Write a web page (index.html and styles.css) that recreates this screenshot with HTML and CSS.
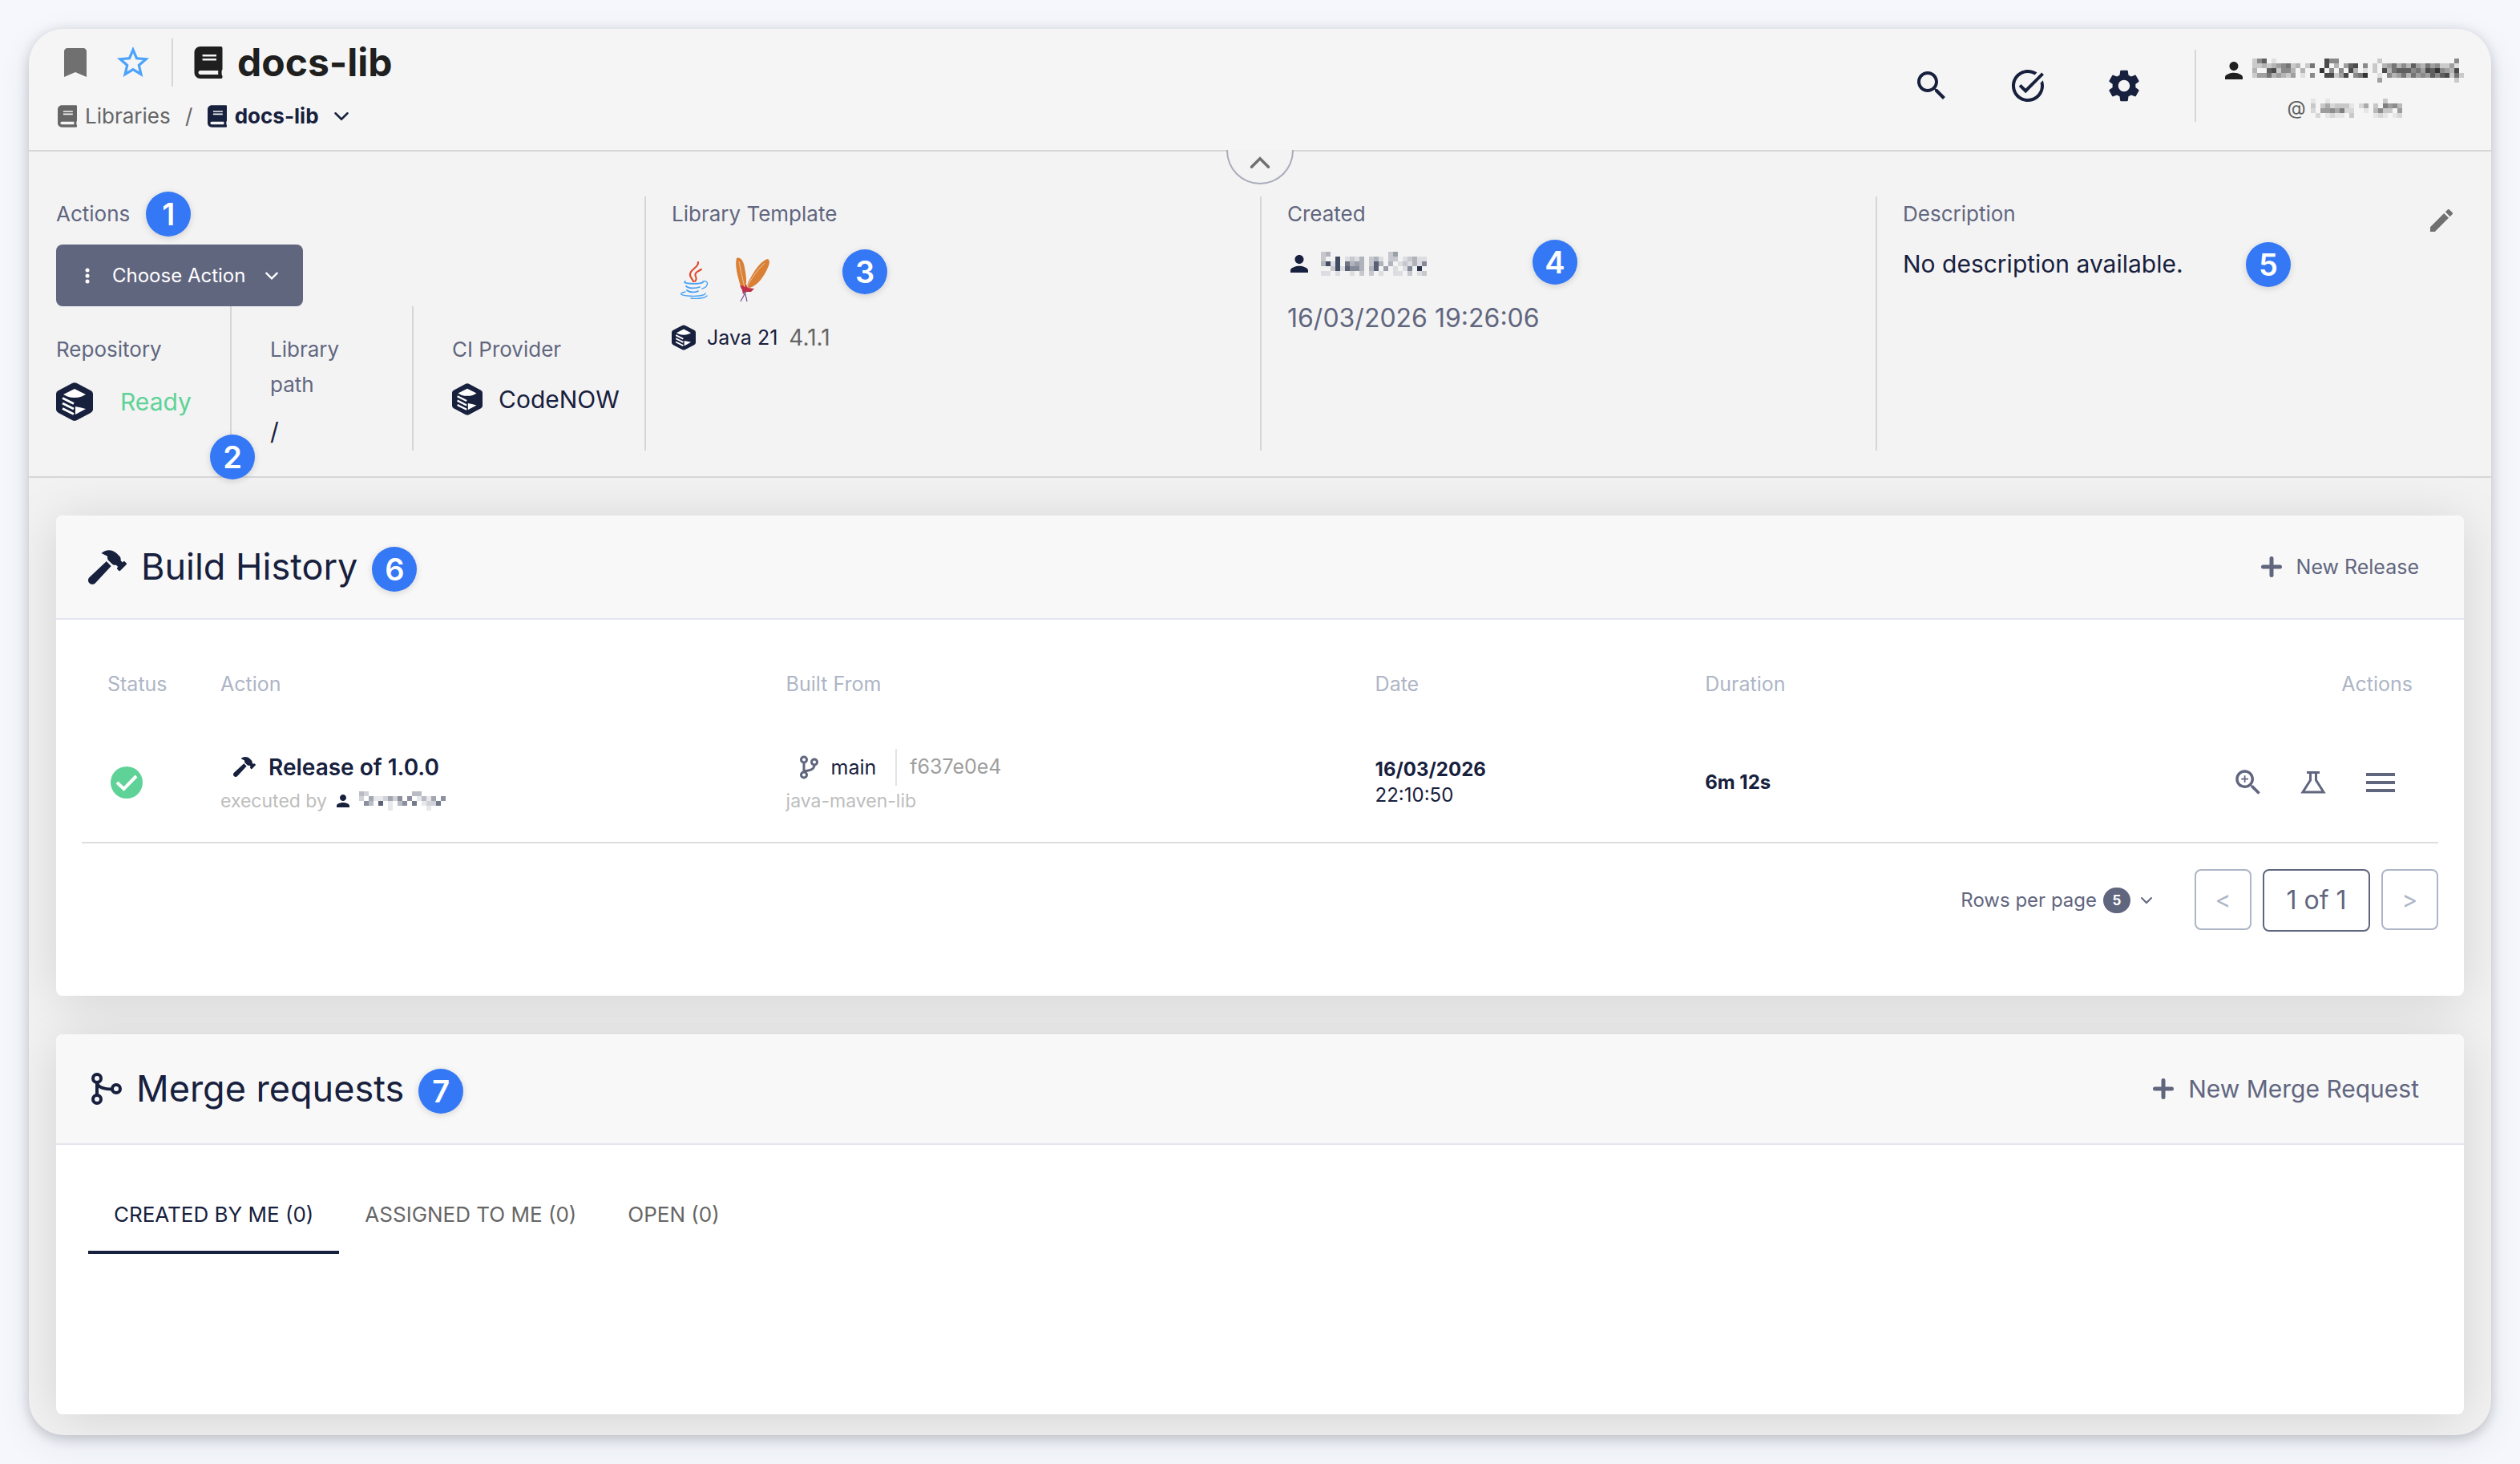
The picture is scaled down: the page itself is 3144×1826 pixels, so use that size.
FILE: index.html
```html
<!DOCTYPE html>
<html lang="en">
  <head>
    <meta charset="UTF-8" />
    <title>docs-lib</title>
    <link rel="stylesheet" href="styles.css">
  </head>
  <body>
    <svg class="sprite" aria-hidden="true">
      <symbol id="i-bookmark" viewBox="0 0 24 24"><path d="M17 3H7c-1.1 0-1.99.9-1.99 2L5 21l7-3 7 3V5c0-1.1-.9-2-2-2z"/></symbol>
      <symbol id="i-star" viewBox="0 0 24 24"><path d="M22 9.24l-7.19-.62L12 2 9.19 8.63 2 9.24l5.46 4.73L5.82 21 12 17.27 18.18 21l-1.63-7.03L22 9.24zM12 15.4l-3.76 2.27 1-4.28-3.32-2.88 4.38-.38L12 6.1l1.71 4.04 4.38.38-3.32 2.88 1 4.28L12 15.4z"/></symbol>
      <symbol id="i-book" viewBox="0 0 448 512"><path d="M448 360V24c0-13.3-10.7-24-24-24H96C43 0 0 43 0 96v320c0 53 43 96 96 96h328c13.3 0 24-10.7 24-24v-16c0-7.5-3.5-14.3-8.9-18.7-4.2-15.4-4.2-59.3 0-74.7 5.4-4.3 8.9-11.1 8.9-18.6zM128 134c0-3.3 2.7-6 6-6h212c3.3 0 6 2.7 6 6v20c0 3.3-2.7 6-6 6H134c-3.3 0-6-2.7-6-6v-20zm0 64c0-3.3 2.7-6 6-6h212c3.3 0 6 2.7 6 6v20c0 3.3-2.7 6-6 6H134c-3.3 0-6-2.7-6-6v-20zm253.4 250H96c-17.7 0-32-14.3-32-32 0-17.6 14.4-32 32-32h285.4c-1.9 17.1-1.9 46.9 0 64z"/></symbol>
      <symbol id="i-chevron" viewBox="0 0 16 16"><path d="M2 5l6 6 6-6" fill="none" stroke="currentColor" stroke-width="2" stroke-linecap="round"/></symbol>
      <symbol id="i-search" viewBox="0 0 24 24"><path d="M15.5 14h-.79l-.28-.27C15.41 12.59 16 11.11 16 9.5 16 5.91 13.09 3 9.5 3S3 5.91 3 9.5 5.91 16 9.5 16c1.61 0 3.09-.59 4.23-1.57l.27.28v.79l5 4.99L20.49 19l-4.99-5zm-6 0C7.01 14 5 11.99 5 9.5S7.01 5 9.5 5 14 7.01 14 9.5 11.99 14 9.5 14z"/></symbol>
      <symbol id="i-zoom" viewBox="0 0 24 24"><path d="M15.5 14h-.79l-.28-.27C15.41 12.59 16 11.11 16 9.5 16 5.91 13.09 3 9.5 3S3 5.91 3 9.5 5.91 16 9.5 16c1.61 0 3.09-.59 4.23-1.57l.27.28v.79l5 4.99L20.49 19l-4.99-5zm-6 0C7.01 14 5 11.99 5 9.5S7.01 5 9.5 5 14 7.01 14 9.5 11.99 14 9.5 14zM12 10h-2v2H9v-2H7V9h2V7h1v2h2v1z"/></symbol>
      <symbol id="i-task" viewBox="0 0 24 24"><path d="M22 5.18L10.59 16.6l-4.24-4.24 1.41-1.41 2.83 2.83 10-10L22 5.18zM19.79 10.22c.13.57.21 1.17.21 1.78 0 4.42-3.58 8-8 8s-8-3.58-8-8 3.58-8 8-8c1.58 0 3.04.46 4.28 1.25l1.44-1.44C16.1 2.67 14.13 2 12 2 6.48 2 2 6.48 2 12s4.48 10 10 10 10-4.48 10-10c0-1.19-.22-2.33-.6-3.39l-1.61 1.61z"/></symbol>
      <symbol id="i-gear" viewBox="0 0 24 24"><path d="M19.14 12.94c.04-.3.06-.61.06-.94 0-.32-.02-.64-.07-.94l2.03-1.58c.18-.14.23-.41.12-.61l-1.92-3.32c-.12-.22-.37-.29-.59-.22l-2.39.96c-.5-.38-1.03-.7-1.62-.94l-.36-2.54c-.04-.24-.24-.41-.48-.41h-3.84c-.24 0-.43.17-.47.41l-.36 2.54c-.59.24-1.13.57-1.62.94l-2.39-.96c-.22-.08-.47 0-.59.22L2.74 8.87c-.12.21-.08.47.12.61l2.03 1.58c-.05.3-.09.63-.09.94s.02.64.07.94l-2.03 1.58c-.18.14-.23.41-.12.61l1.92 3.32c.12.22.37.29.59.22l2.39-.96c.5.38 1.03.7 1.62.94l.36 2.54c.05.24.24.41.48.41h3.84c.24 0 .44-.17.47-.41l.36-2.54c.59-.24 1.13-.56 1.62-.94l2.39.96c.22.08.47 0 .59-.22l1.92-3.32c.12-.22.07-.47-.12-.61l-2.01-1.58zM12 15.6c-1.98 0-3.6-1.62-3.6-3.6s1.62-3.6 3.6-3.6 3.6 1.62 3.6 3.6-1.62 3.6-3.6 3.6z"/></symbol>
      <symbol id="i-person" viewBox="4 4 16 16"><path d="M12 12c2.21 0 4-1.79 4-4s-1.79-4-4-4-4 1.79-4 4 1.79 4 4 4zm0 2c-2.67 0-8 1.34-8 4v2h16v-2c0-2.66-5.33-4-8-4z"/></symbol>
      <symbol id="i-edit" viewBox="3 3 18 18"><path d="M3 17.25V21h3.75L17.81 9.94l-3.75-3.75L3 17.25zM20.71 7.04c.39-.39.39-1.02 0-1.41l-2.34-2.34c-.39-.39-1.02-.39-1.41 0l-1.83 1.83 3.75 3.75 1.83-1.83z"/></symbol>
      <symbol id="i-hammer" viewBox="0 0 576 512"><path d="M571.31 193.94l-22.63-22.63c-6.25-6.25-16.38-6.25-22.63 0l-11.31 11.31-28.9-28.9c5.63-21.31.36-44.9-16.35-61.61l-45.25-45.25c-62.48-62.48-163.79-62.48-226.28 0l90.51 45.25v18.75c0 16.97 6.74 33.25 18.75 45.25l49.14 49.14c16.71 16.71 40.3 21.98 61.61 16.35l28.9 28.9-11.31 11.31c-6.25 6.25-6.25 16.38 0 22.63l22.63 22.63c6.25 6.25 16.38 6.25 22.63 0l90.51-90.51c6.23-6.24 6.23-16.37-.02-22.62zm-286.72-15.2c-3.7-3.7-6.84-7.79-9.85-11.95L19.64 404.96c-25.57 23.88-26.26 64.19-1.53 88.93s65.05 24.05 88.92-1.53l238.13-255.07c-3.96-2.91-7.9-5.87-11.44-9.41l-49.13-49.14z"/></symbol>
      <symbol id="i-plus" viewBox="0 0 26 26"><path d="M13 2.5v21M2.5 13h21" stroke="currentColor" stroke-width="5" stroke-linecap="round"/></symbol>
      <symbol id="i-check" viewBox="0 0 40 40"><circle cx="20" cy="20" r="20" fill="#5fd297"/><path d="M8 20l8.500 8L32 12" fill="none" stroke="#fff" stroke-width="4"/></symbol>
      <symbol id="i-dots" viewBox="0 0 6 20"><circle cx="3" cy="3" r="2.500"/><circle cx="3" cy="10" r="2.500"/><circle cx="3" cy="17" r="2.500"/></symbol>
      <symbol id="i-branch" viewBox="0 0 24 30"><g fill="none" stroke="currentColor" stroke-width="3"><circle cx="6" cy="5.500" r="3.500"/><circle cx="19" cy="8.500" r="3.500"/><circle cx="6" cy="24.500" r="3.500"/><path d="M6 9v12M19 12c0 6-6 7-13 8"/></g></symbol>
      <symbol id="i-merge" viewBox="0 0 38 40"><g fill="none" stroke="currentColor" stroke-width="4"><circle cx="7" cy="7" r="5"/><circle cx="7" cy="33" r="5"/><circle cx="31" cy="20" r="5"/><path d="M7 12v16M7 12c1 6 8 8.500 19 8.500"/></g></symbol>
      <symbol id="i-flask" viewBox="0 0 32 28"><path d="M12.500 2v9L3 26h26l-9.500-15V2M8 1.500h16" fill="none" stroke="currentColor" stroke-width="3"/></symbol>
      <symbol id="i-menu" viewBox="0 0 36 24"><path d="M0 0h36v4H0zM0 10h36v4H0zM0 20h36v4H0z"/></symbol>
      <symbol id="i-cube" viewBox="0 0 46 48">
        <path d="M20 1a6 6 0 0 1 6 0l17 9a5 5 0 0 1 3 5v18a5 5 0 0 1-3 5l-17 9a6 6 0 0 1-6 0L3 38a5 5 0 0 1-3-5V15a5 5 0 0 1 3-5z"/>
        <path d="M23 8l14 7-5 2.500q-9 3-18 0L9 15zM24 30q6 1 13 3l-13 7z" fill="#fff"/>
        <path d="M8 19.500l14 7M8 26l14 7M8 32.500l14 7" stroke="#fff" stroke-width="2.800"/>
      </symbol>
    </svg>

    <main class="window">
      <header class="topbar">
        <div class="topbar-left">
          <div class="title-row">
            <button class="icon-btn muted" aria-label="Bookmark"><svg class="icon"><use href="#i-bookmark"/></svg></button>
            <button class="icon-btn star" aria-label="Favourite"><svg class="icon"><use href="#i-star"/></svg></button>
            <h1><svg class="book-lg"><use href="#i-book"/></svg>docs-lib</h1>
          </div>
          <nav class="breadcrumb">
            <a href="#"><svg class="book"><use href="#i-book"/></svg>Libraries</a>
            <span class="slash">/</span>
            <a href="#" class="current"><svg class="book"><use href="#i-book"/></svg>docs-lib</a>
            <svg class="chevron"><use href="#i-chevron"/></svg>
          </nav>
        </div>
        <div class="topbar-right">
          <button class="icon-btn" aria-label="Search"><svg class="icon"><use href="#i-search"/></svg></button>
          <button class="icon-btn" aria-label="Tasks"><svg class="icon"><use href="#i-task"/></svg></button>
          <button class="icon-btn" aria-label="Settings"><svg class="icon"><use href="#i-gear"/></svg></button>
          <div class="user">
            <div class="user-line"><svg class="person"><use href="#i-person"/></svg><svg class="mosaic" data-color="#1f1f1f" data-rows="257.1..........855........2...............5./2232345623.26..8.3.478.5.2.3463537436452241/3..782553.3...9.5.5.83.1.2.8367775648795438./244634324.1.5..88248.569..1.5346364547578262/..........................4...............2."></svg></div>
            <div class="user-line handle">@<svg class="mosaic" data-color="#606060" data-rows=".1..1...........3../.3.3523331.25.3.8674/.2.6675822..1.4733.6/..2.1211.3....121.12"></svg></div>
          </div>
        </div>
      </header>

      <section class="details">
        <button class="collapse" aria-label="Collapse"><svg><use href="#i-chevron"/></svg></button>
        <div class="col">
          <div class="label">Actions <span class="badge">1</span></div>
          <button class="choose"><svg class="dots"><use href="#i-dots"/></svg>Choose Action<svg class="chevron"><use href="#i-chevron"/></svg></button>
          <div class="subcols">
            <div class="subcol repo">
              <div class="label">Repository</div>
              <div class="value ready"><svg class="cube-lg"><use href="#i-cube"/></svg>Ready</div>
              <span class="badge badge-repo">2</span>
            </div>
            <div class="subcol path">
              <div class="label">Library path</div>
              <div class="value">/</div>
            </div>
            <div class="subcol">
              <div class="label">CI Provider</div>
              <div class="value ci"><svg class="cube"><use href="#i-cube"/></svg>CodeNOW</div>
            </div>
          </div>
        </div>
        <div class="col">
          <div class="label">Library Template</div>
          <div class="logos">
            <svg class="java" viewBox="0 0 36 48">
              <g fill="none" stroke-linecap="round">
                <path d="M23 2c1 7-11 9-10 16 0 3 3 5 4 8" stroke="#e2472a" stroke-width="2.200"/>
                <path d="M27 11c-6 3-9 5-7 9 1 2 1 4-1 6" stroke="#e2472a" stroke-width="2"/>
                <path d="M7 26c-6 3 18 4 22 1M8 32c3 3 12 3 17 1M9 37c3 3 11 3 14 1" stroke="#4ba3f5" stroke-width="1.800"/>
                <path d="M29 26c8-2 7 7-1 9M7 39c-8 2-7 4 3 5 9 1 21 0 22-3M14 47c8 1 17 0 20-3" stroke="#4ba3f5" stroke-width="1.400"/>
              </g>
            </svg>
            <svg class="maven" viewBox="0 0 42 56">
              <path d="M1 1c5-2 9 4 10 12 2 10 3 18 1 25-4 2-7-3-8-9C1 19-1 8 1 1z" fill="#d98036"/>
              <path d="M40 2c4 3 1 9-3 17-5 9-12 17-20 19-3 0-3-3-2-6C20 22 30 4 40 2z" fill="#d98036"/>
              <path d="M5 35l6 1 2-2 2 4 8 1-4 4-7 0-3 3-1-5z" fill="#c02f45"/>
              <path d="M4 5c2 12 5 24 7 32M36 7C27 16 18 28 14 37" stroke="#f0c9a0" stroke-width="1" fill="none"/>
              <path d="M11 42l3 13M13 42L6 55" stroke="#75508c" stroke-width="1.200"/>
            </svg>
          </div>
          <div class="template"><svg class="cube-sm"><use href="#i-cube"/></svg>Java 21 <span>4.1.1</span></div>
          <span class="badge badge-template">3</span>
        </div>
        <div class="col">
          <div class="label">Created</div>
          <div class="value creator"><svg class="person"><use href="#i-person"/></svg><svg class="mosaic" data-color="#17203d" data-rows="23............24......./2..8.1213.231.22.12311./3818.6343.273.3.121315../..2817553.37.4.1.15.9../11.1..1.2.2.1..11.2.12."></svg></div>
          <div class="created-at">16/03/2026 19:26:06</div>
          <span class="badge badge-created">4</span>
        </div>
        <div class="col">
          <div class="label">Description</div>
          <div class="value">No description available.</div>
          <button class="edit" aria-label="Edit description"><svg><use href="#i-edit"/></svg></button>
          <span class="badge badge-description">5</span>
        </div>
      </section>

      <div class="content">
        <section class="card">
          <div class="card-header">
            <h2><svg class="hammer-lg"><use href="#i-hammer"/></svg>Build History <span class="badge">6</span></h2>
            <button class="link-btn"><svg><use href="#i-plus"/></svg>New Release</button>
          </div>
          <div class="card-body">
            <table>
              <thead>
                <tr>
                  <th class="c-status">Status</th>
                  <th class="c-action">Action</th>
                  <th class="c-built">Built From</th>
                  <th class="c-date">Date</th>
                  <th>Duration</th>
                  <th class="c-actions">Actions</th>
                </tr>
              </thead>
              <tbody>
                <tr>
                  <td><svg class="status-ok" role="img" aria-label="Success"><use href="#i-check"/></svg></td>
                  <td>
                    <div class="line-main strong"><svg class="hammer"><use href="#i-hammer"/></svg>Release of 1.0.0</div>
                    <div class="line-sub">executed by<svg class="person-sm"><use href="#i-person"/></svg><svg class="mosaic" data-color="#17203d" data-rows="32.........33...../2.4112425.5.1314.5/.53.7.1.35.6.1226./......1.......1..."></svg></div>
                  </td>
                  <td>
                    <div class="line-main"><svg class="branch"><use href="#i-branch"/></svg>main<span class="hash">f637e0e4</span></div>
                    <div class="line-sub">java-maven-lib</div>
                  </td>
                  <td class="date"><strong>16/03/2026</strong><br>22:10:50</td>
                  <td class="date"><strong>6m 12s</strong></td>
                  <td>
                    <div class="row-actions">
                      <button aria-label="Detail"><svg class="zoom"><use href="#i-zoom"/></svg></button>
                      <button aria-label="Tests"><svg class="flask"><use href="#i-flask"/></svg></button>
                      <button aria-label="Menu"><svg class="menu"><use href="#i-menu"/></svg></button>
                    </div>
                  </td>
                </tr>
              </tbody>
            </table>
            <div class="pagination">
              <button class="rows">Rows per page<span class="count">5</span><svg class="chevron-sm"><use href="#i-chevron"/></svg></button>
              <button class="page" disabled>&lt;</button>
              <button class="page active">1 of 1</button>
              <button class="page" disabled>&gt;</button>
            </div>
          </div>
        </section>

        <section class="card merge">
          <div class="card-header">
            <h2><svg class="merge-icon"><use href="#i-merge"/></svg>Merge requests <span class="badge">7</span></h2>
            <button class="link-btn large"><svg><use href="#i-plus"/></svg>New Merge Request</button>
          </div>
          <div class="tabs" role="tablist">
            <button class="tab active" role="tab">CREATED BY ME (0)</button>
            <button class="tab" role="tab">ASSIGNED TO ME (0)</button>
            <button class="tab" role="tab">OPEN (0)</button>
          </div>
        </section>
      </div>
    </main>

    <script>
      // Hidden user names: every digit is the darkness of one 6px block
      const NS = "http://www.w3.org/2000/svg";
      document.querySelectorAll(".mosaic").forEach((svg) => {
        const rows = svg.dataset.rows.split("/");
        const cols = Math.max(...rows.map((row) => row.length));
        svg.setAttribute("width", cols * 6);
        svg.setAttribute("height", rows.length * 6);
        rows.forEach((row, y) => {
          [...row].forEach((level, x) => {
            if (level === ".") return;
            const rect = document.createElementNS(NS, "rect");
            rect.setAttribute("x", x * 6);
            rect.setAttribute("y", y * 6);
            rect.setAttribute("width", 6);
            rect.setAttribute("height", 6);
            rect.setAttribute("fill", svg.dataset.color);
            rect.setAttribute("fill-opacity", level / 10);
            svg.appendChild(rect);
          });
        });
      });
    </script>
  </body>
</html>
```
FILE: styles.css
```css
* {
  box-sizing: border-box;
}
body {
  margin: 0;
  padding: 36px;
  background-color: #f5f7fc;
  color: #17203d;
  font-family: Inter, "Liberation Sans", sans-serif;
  font-size: 30px;
  line-height: 44px;
}
.sprite {
  display: none;
}
svg {
  display: block;
  flex-shrink: 0;
  fill: currentColor;
  shape-rendering: auto;
}
.mosaic {
  shape-rendering: crispEdges;
}
button {
  display: flex;
  align-items: center;
  padding: 0;
  border: none;
  background: none;
  color: inherit;
  font: inherit;
  cursor: pointer;
}
a {
  color: inherit;
  text-decoration: none;
}
h1,
h2 {
  display: flex;
  align-items: center;
  margin: 0;
}
.window {
  display: flex;
  flex-direction: column;
  min-height: calc(100vh - 72px);
  background-color: #f2f2f2;
  border-radius: 44px;
  overflow: hidden;
  box-shadow: 0 4px 16px rgba(0, 0, 0, 0.2), 0 12px 44px rgba(40, 50, 90, 0.08);
}

/* top bar */
.topbar {
  display: flex;
  justify-content: space-between;
  align-items: flex-start;
  padding: 12px 34px 20px;
  background-color: #f5f5f5;
}
.title-row {
  display: flex;
  align-items: center;
  gap: 24px;
  height: 60px;
}
.icon {
  width: 48px;
  height: 48px;
}
.muted {
  color: #707070;
}
.star {
  color: #4ba3fb;
}
h1 {
  height: 60px;
  padding-left: 26px;
  border-left: 2px solid #d6d6d6;
  gap: 18px;
  color: #1f1f1f;
  font-size: 48px;
}
.book-lg {
  width: 36px;
  height: 40px;
}
.breadcrumb {
  display: flex;
  align-items: center;
  margin-top: 15px;
  padding-left: 2px;
  color: #666;
  font-size: 26px;
}
.breadcrumb a {
  display: flex;
  align-items: center;
  gap: 10px;
}
.slash {
  width: 46px;
  text-align: center;
}
.breadcrumb .current {
  color: #17203d;
  font-weight: bold;
}
.book {
  width: 24px;
  height: 28px;
}
.chevron {
  width: 20px;
  height: 20px;
}
.breadcrumb .chevron {
  margin-left: 18px;
  color: #17203d;
}
.topbar-right {
  display: flex;
  align-items: center;
  gap: 72px;
  height: 90px;
  margin-top: 14px;
}
.user {
  height: 90px;
  padding-top: 2px;
  padding-left: 36px;
  border-left: 2px solid #d6d6d6;
  color: #1f1f1f;
  margin-left: -8px;
}
.user-line {
  display: flex;
  justify-content: center;
  align-items: center;
  height: 48px;
  gap: 12px;
}
.handle {
  height: 46px;
  gap: 0;
  color: #606060;
  font-size: 24px;
}
.person {
  width: 22px;
  height: 22px;
}

/* details */
.details {
  position: relative;
  z-index: 1;
  display: grid;
  grid-template-columns: repeat(4, 1fr);
  padding: 56px 0 32px;
  background-color: #f3f3f3;
  border-top: 2px solid #d6d6d6;
  border-bottom: 2px solid #d6d6d6;
}
.collapse {
  position: absolute;
  top: -2px;
  left: calc(50% - 42px);
  justify-content: center;
  width: 84px;
  height: 43px;
  padding-bottom: 10px;
  background-color: #f3f3f3;
  border: 2px solid #a9abbb;
  border-top: none;
  border-radius: 0 0 42px 42px;
  color: #707070;
}
.collapse svg {
  width: 28px;
  height: 28px;
  transform: rotate(180deg);
}
.col {
  position: relative;
  padding: 0 32px;
  border-left: 2px solid #d6d6d6;
}
.col:nth-of-type(1) {
  padding: 0 0 0 34px;
  border-left: none;
}
.label {
  display: flex;
  align-items: center;
  gap: 20px;
  height: 44px;
  color: #61667f;
  font-size: 26px;
}
.badge {
  flex-shrink: 0;
  width: 56px;
  height: 56px;
  border-radius: 50%;
  background-color: #3478f6;
  box-shadow: 0 2px 8px rgba(0, 0, 0, 0.15);
  color: #fff;
  font-size: 38px;
  font-weight: 600;
  line-height: 56px;
  text-align: center;
}
.badge-repo,
.badge-template,
.badge-created,
.badge-description {
  position: absolute;
  z-index: 1;
}
.badge-repo {
  right: -31px;
  bottom: -36px;
}
.badge-template {
  top: 66px;
  left: 245px;
}
.badge-created {
  top: 54px;
  left: 338px;
}
.badge-description {
  top: 57px;
  left: 460px;
}
.choose {
  gap: 28px;
  height: 77px;
  margin-top: 16px;
  padding: 0 30px 0 36px;
  background-color: #61667f;
  border-radius: 8px;
  color: #fff;
  font-size: 24px;
}
.choose .chevron {
  width: 18px;
  margin-left: -4px;
}
.dots {
  width: 6px;
  height: 20px;
}
.subcols {
  display: flex;
  height: 180px;
}
.subcol {
  position: relative;
  padding: 32px 0 0 48px;
  border-left: 2px solid #d6d6d6;
}
.subcol .label {
  height: auto;
}
.repo {
  z-index: 1;
  width: 217px;
  padding-left: 0;
  border-left: none;
}
.path {
  width: 227px;
  padding-right: 60px;
}
.value {
  display: flex;
  align-items: center;
  height: 44px;
  margin-top: 18px;
}
.path .value {
  margin-top: 14px;
}
.ready {
  gap: 34px;
  height: 50px;
  color: #5fd297;
}
.ci {
  gap: 20px;
}
.cube-lg,
.cube,
.cube-sm {
  color: #17203d;
}
.cube-lg {
  width: 46px;
  height: 48px;
}
.cube {
  width: 38px;
  height: 40px;
}
.cube-sm {
  width: 30px;
  height: 32px;
}
.logos {
  display: flex;
  align-items: center;
  gap: 34px;
  margin-top: 32px;
  padding-left: 10px;
}
.java {
  width: 36px;
  height: 48px;
}
.maven {
  width: 42px;
  height: 56px;
}
.template {
  display: flex;
  align-items: center;
  gap: 14px;
  margin-top: 22px;
  font-size: 25px;
}
.template span {
  color: #666;
  font-size: 28px;
}
.creator {
  gap: 16px;
  padding-left: 4px;
}
.created-at {
  margin-top: 24px;
  color: #61667f;
  font-size: 32px;
}
.edit {
  position: absolute;
  top: 16px;
  right: 48px;
  color: #707070;
}
.edit svg {
  width: 28px;
  height: 28px;
}

/* cards */
.content {
  display: flex;
  flex: 1;
  flex-direction: column;
  gap: 48px;
  padding: 47px 34px 26px;
}
.card {
  position: relative;
  background-color: #fff;
  border-radius: 8px;
  box-shadow: 0 6px 64px rgba(0, 0, 0, 0.13);
}
.merge {
  flex: 1;
}
.card-header {
  display: flex;
  justify-content: space-between;
  align-items: center;
  height: 130px;
  padding: 0 56px 0 40px;
  background-color: #f8f8f8;
  border-bottom: 2px solid #e3e6f0;
  border-radius: 8px 8px 0 0;
}
.merge .card-header {
  height: 138px;
}
h2 {
  gap: 18px;
  font-size: 45px;
  font-weight: normal;
}
h2 .badge {
  margin-top: 6px;
}
.hammer-lg {
  width: 48px;
  height: 43px;
}
.merge-icon {
  width: 38px;
  height: 40px;
  margin-left: 4px;
}
.link-btn {
  gap: 18px;
  color: #61667f;
  font-size: 25px;
}
.large {
  font-size: 30px;
}
.link-btn svg {
  width: 26px;
  height: 26px;
}
.card-body {
  padding: 32px 32px 80px;
}
table {
  width: 100%;
  border-collapse: collapse;
  table-layout: fixed;
}
th {
  height: 96px;
  padding: 0 32px;
  color: #adb5c6;
  font-size: 25px;
  font-weight: normal;
  text-align: left;
}
td {
  height: 150px;
  padding: 0 32px;
  border-bottom: 2px solid #dedede;
}
.c-status {
  width: 141px;
}
.c-action {
  width: 24%;
}
.c-built {
  width: 25%;
}
.c-date {
  width: 14%;
}
th.c-actions {
  text-align: right;
}
.status-ok {
  width: 40px;
  height: 40px;
  margin-left: 4px;
}
.line-main,
.line-sub {
  display: flex;
  align-items: center;
}
.line-main {
  height: 46px;
  gap: 16px;
  padding-left: 16px;
  font-size: 25px;
}
.strong {
  font-size: 28px;
  font-weight: 600;
}
.line-sub {
  height: 38px;
  gap: 12px;
  color: #bdbdbd;
  font-size: 23px;
}
.hammer {
  width: 28px;
  height: 25px;
}
.person-sm {
  width: 16px;
  height: 16px;
  color: #17203d;
}
.branch {
  width: 24px;
  height: 30px;
  color: #61667f;
}
.hash {
  height: 46px;
  margin-left: 8px;
  padding-left: 16px;
  border-left: 2px solid #e4e4e4;
  color: #9e9e9e;
}
.date {
  font-size: 24px;
  line-height: 32px;
}
.row-actions {
  display: flex;
  justify-content: flex-end;
  align-items: center;
  gap: 50px;
  padding-right: 22px;
  color: #61667f;
}
.zoom {
  width: 42px;
  height: 42px;
  margin-right: -6px;
}
.flask {
  width: 32px;
  height: 28px;
}
.menu {
  width: 36px;
  height: 24px;
}
.pagination {
  display: flex;
  justify-content: flex-end;
  gap: 14px;
  padding-top: 32px;
  color: #61667f;
}
.rows {
  gap: 8px;
  margin-right: 38px;
  font-size: 24px;
}
.count {
  width: 34px;
  height: 32px;
  border-radius: 16px;
  background-color: #61667f;
  color: #fff;
  font-size: 17px;
  font-weight: bold;
  line-height: 32px;
  text-align: center;
}
.chevron-sm {
  width: 16px;
  height: 16px;
  margin-left: 4px;
}
.page {
  justify-content: center;
  width: 71px;
  height: 76px;
  border: 2px solid #adb5c6;
  border-radius: 8px;
  color: #adb5c6;
}
.page.active {
  width: 134px;
  height: 78px;
  border-color: #61667f;
  color: #61667f;
  font-size: 32px;
}
.tabs {
  display: flex;
  padding: 42px 40px;
}
.tab {
  height: 94px;
  padding: 0 32px;
  border-bottom: 4px solid transparent;
  color: #666;
  font-size: 26px;
}
.tab.active {
  border-color: #17203d;
  color: #17203d;
}
```
